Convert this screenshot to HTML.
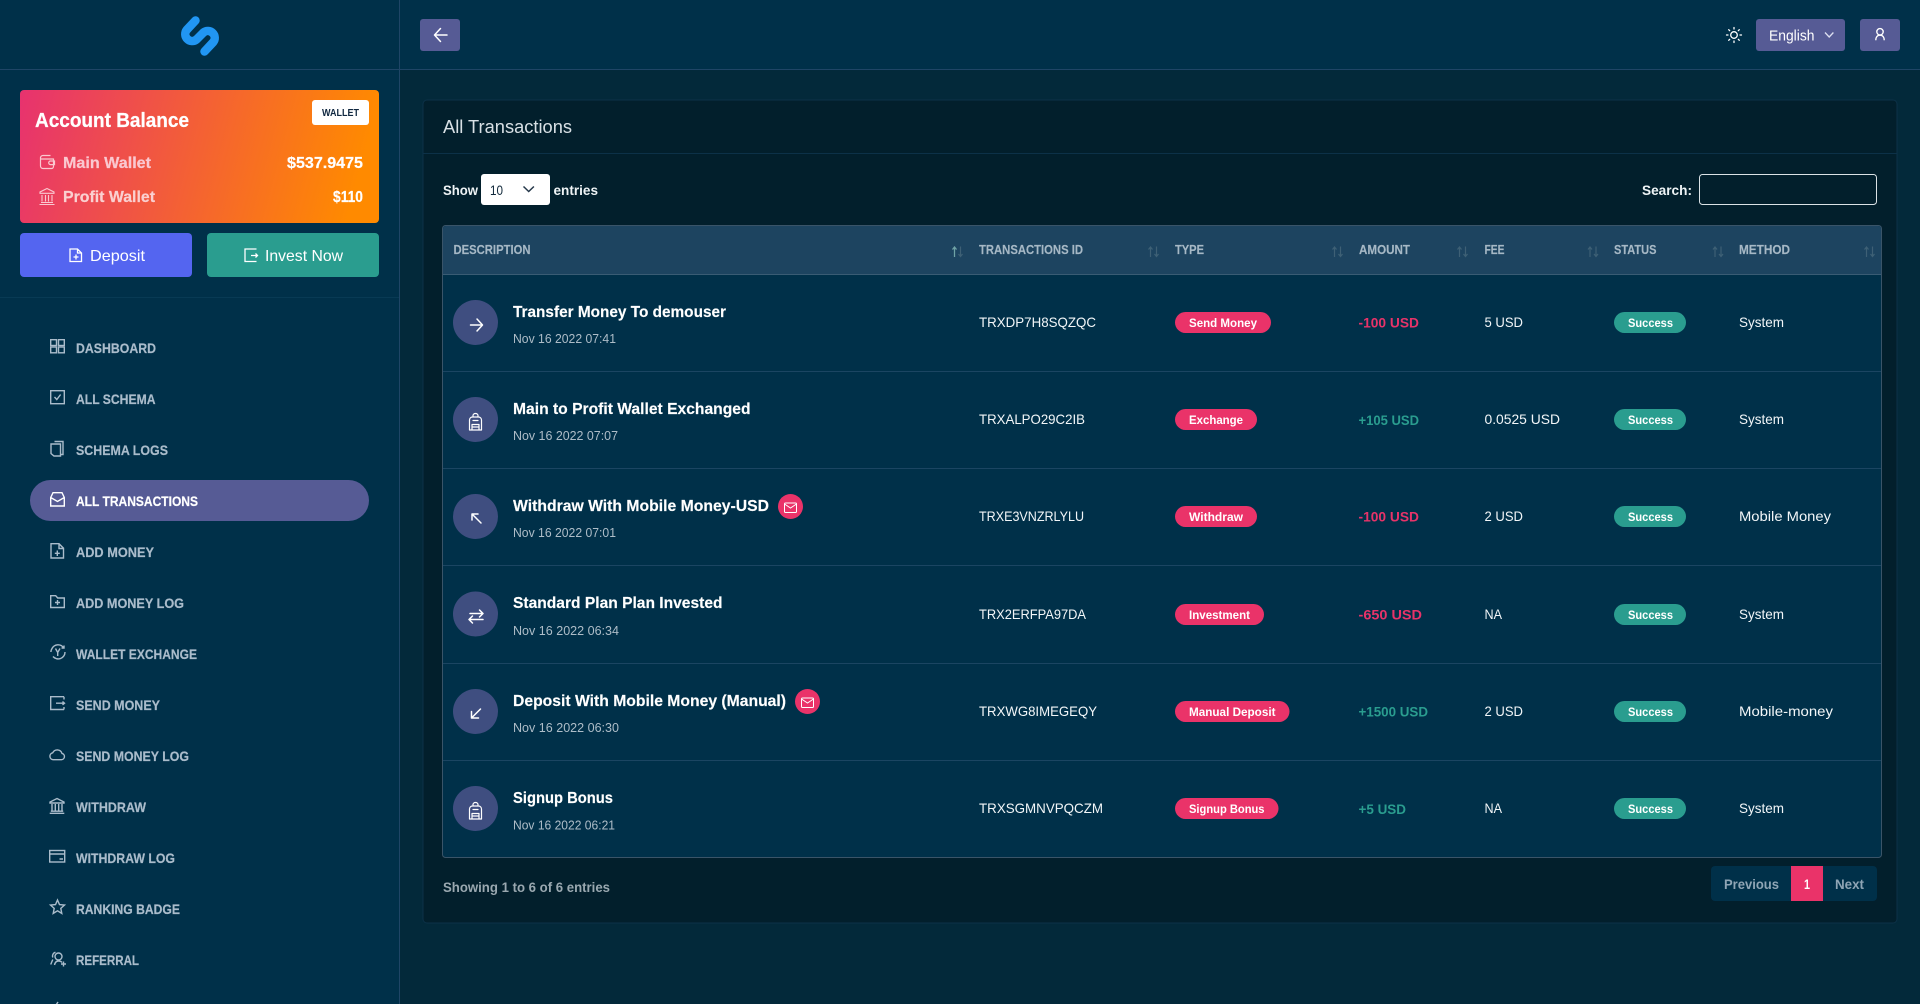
<!DOCTYPE html>
<html lang="en"><head><meta charset="utf-8"><title>All Transactions</title>
<style>
html,body{margin:0;padding:0;background:#03293a;width:1920px;height:1004px;overflow:hidden}
svg{display:block;font-family:"Liberation Sans",sans-serif}
.m{font-size:14px;font-weight:700;fill:#aabccb;stroke:#aabccb;stroke-width:.2px}
.th{font-size:12.5px;font-weight:700;fill:#a6b8c5;stroke:#a6b8c5;stroke-width:.15px}
.t{font-size:16px;font-weight:700;fill:#fff;stroke:#fff;stroke-width:.15px}
.d{font-size:13px;fill:#aebdc8}
.c{font-size:14px;fill:#f2f6f8}
.p{font-size:11.5px;font-weight:700;fill:#fff}
.r{font-size:14px;font-weight:700;fill:#e73369}
.g{font-size:14px;font-weight:700;fill:#2a9d8f}
.b{font-size:14px;font-weight:700;fill:#eef3f5}
.pg{font-size:14px;font-weight:700;fill:#8fa5b5}
.ic{fill:none;stroke:#aabccb;stroke-width:1.4}
.w{fill:none;stroke:#fff;stroke-width:1.5;stroke-linecap:round;stroke-linejoin:round}
</style></head><body>
<svg width="1920" height="1004" viewBox="0 0 1920 1004" xmlns="http://www.w3.org/2000/svg">
<defs>
<linearGradient id="bal" x1="0" x2="1" y1="0" y2="0.1"><stop offset="0" stop-color="#e7326f"/><stop offset="1" stop-color="#ff8a00"/></linearGradient>
<g id="sort"><path d="M3 11V1M1 3.5L3 1l2 2.5" fill="none" stroke="#3e6075" stroke-width="1.2"/><path d="M9 0.5v10M7 8l2 2.5L11 8" fill="none" stroke="#3e6075" stroke-width="1.2"/></g>
<g id="env"><circle cx="0" cy="0" r="12.5" fill="#ea3369"/><rect x="-6" y="-3.5" width="12" height="9.5" rx="1" fill="none" stroke="#fff" stroke-width="1"/><path d="M-6-2.5L0 1.5 6-2.5" fill="none" stroke="#fff" stroke-width="1"/></g>
<g id="bag"><path class="w" style="stroke-width:1.2" d="M-6 8V-2a3 3 0 0 1 3-3h6a3 3 0 0 1 3 3V8zM-2.500-5V-6.500a2.500 2 0 0 1 5 0V-5M-3.500 8V2.500h7V8M-3.500 5h7M-2.500-1.500h5"/></g>
</defs>

<rect x="0" y="0" width="400" height="1004" fill="#003049"/>
<rect x="400" y="0" width="1520" height="70" fill="#003049"/>
<rect x="0" y="69" width="1920" height="1" fill="#1f4566"/>
<rect x="399" y="0" width="1" height="1004" fill="#1f4566"/>
<rect x="0" y="297" width="399" height="1" fill="#083a54"/>

<path d="M195.500 20.500L186.800 29.800A6.900 6.900 0 0 0 196.500 39.500L203.500 32.500A6.900 6.900 0 0 1 213.200 42.200L204.500 51.500" fill="none" stroke="#2196f3" stroke-width="8.500" stroke-linecap="round" stroke-linejoin="round"/>

<rect x="20" y="90" width="359" height="133" rx="4" fill="url(#bal)"/>
<text x="35" y="127" font-size="20" font-weight="700" fill="#fff" stroke="#fff" stroke-width=".25" textLength="154" lengthAdjust="spacingAndGlyphs">Account Balance</text>
<rect x="312" y="100" width="57" height="25" rx="3" fill="#fff"/>
<text x="322" y="116" font-size="10.500" font-weight="700" fill="#0f2740" textLength="37" lengthAdjust="spacingAndGlyphs">WALLET</text>
<path d="M50.500 155.500H43a2.500 2.500 0 0 0-2.500 2.500v8a2.500 2.500 0 0 0 2.500 2.500h8.500a2 2 0 0 0 2-2V158.500M40.500 159h13M54.500 161h-4a1.800 1.800 0 0 0 0 3.600h4z" fill="none" stroke="#fac8d0" stroke-width="1.200"/>
<text x="63" y="168" font-size="16" font-weight="700" fill="#fac8d0" stroke="#fac8d0" stroke-width=".2" textLength="88" lengthAdjust="spacingAndGlyphs">Main Wallet</text>
<path d="M47 188.500l7 3.500v1.300H40V192zM42 195v6.500M45.500 195v6.500M48.500 195v6.500M52 195v6.500M41 202.500h12M39.500 204.500h15" fill="none" stroke="#fac8d0" stroke-width="1.100"/>
<text x="63" y="202" font-size="16" font-weight="700" fill="#fad0d0" stroke="#fad0d0" stroke-width=".2" textLength="92" lengthAdjust="spacingAndGlyphs">Profit Wallet</text>
<text x="287" y="168" font-size="16" font-weight="700" fill="#fff" stroke="#fff" stroke-width=".2" textLength="76" lengthAdjust="spacingAndGlyphs">$537.9475</text>
<text x="333" y="202" font-size="16" font-weight="700" fill="#fff" stroke="#fff" stroke-width=".2" textLength="30" lengthAdjust="spacingAndGlyphs">$110</text>

<rect x="20" y="233" width="172" height="44" rx="4" fill="#5465f0"/>
<path d="M70 249h7.500l4 4v8.500H70zM77.500 249v4h4M76 254.500v5M73.500 257h5" fill="none" stroke="#fff" stroke-width="1.300"/>
<text x="90" y="261" font-size="16" fill="#fff" textLength="55" lengthAdjust="spacingAndGlyphs">Deposit</text>
<rect x="207" y="233" width="172" height="44" rx="4" fill="#2a9d8f"/>
<path d="M256.500 249H245v12.500H256.500M251 255.500h6.500M255.500 253.500l2 2-2 2" fill="none" stroke="#fff" stroke-width="1.300"/>
<text x="265" y="261" font-size="16" fill="#fff" textLength="78" lengthAdjust="spacingAndGlyphs">Invest Now</text>

<rect x="30" y="480" width="339" height="41" rx="20.500" fill="#565b95"/>
<text class="m" x="76" y="353" textLength="80" lengthAdjust="spacingAndGlyphs">DASHBOARD</text>
<text class="m" x="76" y="404" textLength="79.500" lengthAdjust="spacingAndGlyphs">ALL SCHEMA</text>
<text class="m" x="76" y="455" textLength="92" lengthAdjust="spacingAndGlyphs">SCHEMA LOGS</text>
<text class="m" x="76" y="506" textLength="122" lengthAdjust="spacingAndGlyphs" style="fill:#fff;stroke:#fff">ALL TRANSACTIONS</text>
<text class="m" x="76" y="557" textLength="78" lengthAdjust="spacingAndGlyphs">ADD MONEY</text>
<text class="m" x="76" y="608" textLength="108" lengthAdjust="spacingAndGlyphs">ADD MONEY LOG</text>
<text class="m" x="76" y="659" textLength="121" lengthAdjust="spacingAndGlyphs">WALLET EXCHANGE</text>
<text class="m" x="76" y="710" textLength="84" lengthAdjust="spacingAndGlyphs">SEND MONEY</text>
<text class="m" x="76" y="761" textLength="113" lengthAdjust="spacingAndGlyphs">SEND MONEY LOG</text>
<text class="m" x="76" y="812" textLength="70" lengthAdjust="spacingAndGlyphs">WITHDRAW</text>
<text class="m" x="76" y="863" textLength="99" lengthAdjust="spacingAndGlyphs">WITHDRAW LOG</text>
<text class="m" x="76" y="914" textLength="104" lengthAdjust="spacingAndGlyphs">RANKING BADGE</text>
<text class="m" x="76" y="965" textLength="63" lengthAdjust="spacingAndGlyphs">REFERRAL</text>

<g class="ic">
<g transform="translate(50,339)"><rect x=".7" y=".7" width="5.800" height="5.800"/><rect x="8.500" y=".7" width="5.800" height="5.800"/><rect x=".7" y="8" width="5.800" height="5.800"/><rect x="8.500" y="8" width="5.800" height="5.800"/></g>
<g transform="translate(50,390)"><rect x=".7" y=".7" width="13.600" height="13"/><path d="M4.500 7l2.300 2.500 3.800-5"/></g>
<g transform="translate(50,440)"><path d="M4.500 1.500H13V14.500H10M1 4h9.500V16H4L1 13.500z"/></g>
<g transform="translate(50,492)" style="stroke:#fff"><path d="M.7 5.500L3 .7h9l2.300 4.800V14H.7zM.7 5.500L7.500 9.500 14.300 5.500"/></g>
<g transform="translate(50,543)"><path d="M1 .7h8l4.500 4.500V15H1zM9 .7V5.500h4.500M7.300 7.500v5.500M4.800 10.300h5"/></g>
<g transform="translate(50,595)"><path d="M.7 .7h5l2 2.300H14.300V12.500H.7zM7.500 5v5M5 7.500h5"/></g>
<g transform="translate(50,644)"><path d="M2 4.500A6.800 6.800 0 0 1 13.500 3.500M15 8A6.800 6.800 0 0 1 3 12.500M11.500 4h2.500V1.500M.9 8A6.800 6.800 0 0 1 2 4.500"/><path d="M5.500 4.500L7.700 8.500 10 4.500M7.700 8.500v3.500"/></g>
<g transform="translate(50,696)"><path d="M14 .7H.7V13.500H14M14 3.500V.7M14 13.500V11M6 7.200h8M12.500 5.500l2 1.700-2 1.700"/></g>
<g transform="translate(49,748)"><path d="M4 11.700H12.500a3.200 3.200 0 0 0 .5-6.300 5 5 0 0 0-9.300-.6A3.500 3.500 0 0 0 4 11.700z"/></g>
<g transform="translate(49,798)"><path d="M8 .5L15 4v1H1V4zM3 6v7M6.300 6v7M9.700 6v7M13 6v7M1.800 13.200h12.400M.7 15.300h14.600"/></g>
<g transform="translate(49,849)"><rect x=".7" y="1.500" width="15" height="11.500"/><path d="M.7 5h15M10.500 10h3.500"/></g>
<g transform="translate(50,899)"><path d="M7.500 1l2 4.600 5 .5-3.700 3.300 1 5-4.300-2.600-4.300 2.600 1-5L.5 6.100l5-.5z"/></g>
<g transform="translate(50,951)"><path d="M5.500 1.300A3.800 3.800 0 0 0 2.800 6.500M2.800 8.500L.7 13.500"/><circle cx="8.500" cy="5.500" r="3.500"/><path d="M4.500 14c.5-2.500 2-4 4-4s3 .8 3.500 1.500M13.500 10.500v5M11 13h5"/></g>
<g transform="translate(50,1001)"><path d="M8 1l-2 3H2"/></g>
</g>

<!-- top bar -->
<rect x="420" y="19" width="40" height="32" rx="3" fill="#565b95"/>
<path class="w" d="M434.500 35H447M440.500 28.500L434.500 35l6 6.500"/>
<g transform="translate(1734,35)" fill="none" stroke="#fff" stroke-width="1.300" stroke-linecap="round"><circle r="3.300"/><path d="M0-7.500v1.500M0 6v1.500M-7.500 0H-6M6 0h1.500M-5.300-5.300l1 1M4.300 4.300l1 1M-5.300 5.300l1-1M4.300-4.300l1-1"/></g>
<rect x="1756" y="19" width="89" height="32" rx="3" fill="#565b95"/>
<text x="1769" y="40.500" font-size="15" fill="#fff" textLength="45.500" lengthAdjust="spacingAndGlyphs">English</text>
<path d="M1825 32.500l4.200 4.500 4.200-4.500" fill="none" stroke="#dcdff0" stroke-width="1.300"/>
<rect x="1860" y="19" width="40" height="32" rx="3" fill="#565b95"/>
<circle cx="1880" cy="31.800" r="3.200" fill="none" stroke="#fff" stroke-width="1.400"/>
<path d="M1875.800 40.200c0-3 1.500-5 4.200-5s4.200 2 4.200 5" fill="none" stroke="#fff" stroke-width="1.400"/>

<!-- card -->
<rect x="423" y="100" width="1474" height="823" rx="4" fill="#021f2c" stroke="#0c3148"/>
<rect x="423" y="153" width="1474" height="1" fill="#0c3148"/>
<text x="443" y="133" font-size="18" fill="#d8e0e5" textLength="129" lengthAdjust="spacingAndGlyphs">All Transactions</text>

<text class="b" x="443" y="195" textLength="35" lengthAdjust="spacingAndGlyphs">Show</text>
<rect x="481" y="174" width="69" height="31" rx="3" fill="#fff"/>
<text x="490" y="195" font-size="14" fill="#10283a" textLength="13" lengthAdjust="spacingAndGlyphs">10</text>
<path d="M523.500 186.500l5.200 5 5.200-5" fill="none" stroke="#25384a" stroke-width="1.500"/>
<text class="b" x="553.500" y="195" textLength="44.500" lengthAdjust="spacingAndGlyphs">entries</text>
<text class="b" x="1642" y="195" textLength="50" lengthAdjust="spacingAndGlyphs">Search:</text>
<rect x="1699.500" y="174.500" width="177" height="30" rx="3" fill="none" stroke="#dbe2e6"/>

<!-- table -->
<rect x="442.500" y="225.500" width="1439" height="632" rx="3" fill="#003049" stroke="#3a5468"/>
<path d="M443 274V229q0-3 3-3H1878q3 0 3 3V274z" fill="#1d4460"/>
<rect x="443" y="274" width="1438" height="1" fill="#3a5c74"/>
<rect x="443" y="371" width="1438" height="1" fill="#1b4562"/>
<rect x="443" y="468" width="1438" height="1" fill="#1b4562"/>
<rect x="443" y="565" width="1438" height="1" fill="#1b4562"/>
<rect x="443" y="663" width="1438" height="1" fill="#1b4562"/>
<rect x="443" y="760" width="1438" height="1" fill="#1b4562"/>

<text class="th" x="453.500" y="254" textLength="77" lengthAdjust="spacingAndGlyphs">DESCRIPTION</text>
<text class="th" x="979" y="254" textLength="104" lengthAdjust="spacingAndGlyphs">TRANSACTIONS ID</text>
<text class="th" x="1175" y="254" textLength="29" lengthAdjust="spacingAndGlyphs">TYPE</text>
<text class="th" x="1359" y="254" textLength="51" lengthAdjust="spacingAndGlyphs">AMOUNT</text>
<text class="th" x="1484.500" y="254" textLength="20" lengthAdjust="spacingAndGlyphs">FEE</text>
<text class="th" x="1614" y="254" textLength="42.500" lengthAdjust="spacingAndGlyphs">STATUS</text>
<text class="th" x="1739" y="254" textLength="51" lengthAdjust="spacingAndGlyphs">METHOD</text>
<use href="#sort" x="951.500" y="246"/>
<path d="M954.500 257V247M952.500 249.500l2-2.500 2 2.500" fill="none" stroke="#6fa3a6" stroke-width="1.200"/>
<use href="#sort" x="1147.500" y="246"/>
<use href="#sort" x="1331.500" y="246"/>
<use href="#sort" x="1456.500" y="246"/>
<use href="#sort" x="1587" y="246"/>
<use href="#sort" x="1712" y="246"/>
<use href="#sort" x="1863.500" y="246"/>

<!-- avatars -->
<g fill="#3f4e80">
<circle cx="475.500" cy="322.500" r="22.500"/><circle cx="475.500" cy="419.500" r="22.500"/><circle cx="475.500" cy="516.500" r="22.500"/><circle cx="475.500" cy="614" r="22.500"/><circle cx="475.500" cy="711.500" r="22.500"/><circle cx="475.500" cy="808.500" r="22.500"/>
</g>
<path class="w" d="M470.500 325H482M477 319l5.500 6-5.500 6"/>
<use href="#bag" x="475.500" y="422"/>
<path class="w" d="M481 523L472 514M472 520v-6h6"/>
<path class="w" d="M470 613.500H483M479.500 610L483 613.500 479.500 617M483 619.500H469M472.500 616L469 619.500 472.500 623"/>
<path class="w" d="M480.500 709L471.500 718M471.500 711.500v6.500h7"/>
<use href="#bag" x="475.500" y="811"/>

<!-- descriptions -->
<text class="t" x="513" y="317" textLength="213" lengthAdjust="spacingAndGlyphs">Transfer Money To demouser</text>
<text class="d" x="513" y="343" textLength="103" lengthAdjust="spacingAndGlyphs">Nov 16 2022 07:41</text>
<text class="t" x="513" y="414" textLength="237.500" lengthAdjust="spacingAndGlyphs">Main to Profit Wallet Exchanged</text>
<text class="d" x="513" y="440" textLength="105" lengthAdjust="spacingAndGlyphs">Nov 16 2022 07:07</text>
<text class="t" x="513" y="511" textLength="256" lengthAdjust="spacingAndGlyphs">Withdraw With Mobile Money-USD</text>
<text class="d" x="513" y="537" textLength="103" lengthAdjust="spacingAndGlyphs">Nov 16 2022 07:01</text>
<use href="#env" x="790.500" y="506.500"/>
<text class="t" x="513" y="608" textLength="209.500" lengthAdjust="spacingAndGlyphs">Standard Plan Plan Invested</text>
<text class="d" x="513" y="635" textLength="106" lengthAdjust="spacingAndGlyphs">Nov 16 2022 06:34</text>
<text class="t" x="513" y="706" textLength="273" lengthAdjust="spacingAndGlyphs">Deposit With Mobile Money (Manual)</text>
<text class="d" x="513" y="732" textLength="106" lengthAdjust="spacingAndGlyphs">Nov 16 2022 06:30</text>
<use href="#env" x="807.500" y="701.500"/>
<text class="t" x="513" y="803" textLength="100" lengthAdjust="spacingAndGlyphs">Signup Bonus</text>
<text class="d" x="513" y="829.500" textLength="102" lengthAdjust="spacingAndGlyphs">Nov 16 2022 06:21</text>

<!-- ids -->
<text class="c" x="979" y="327" textLength="117" lengthAdjust="spacingAndGlyphs">TRXDP7H8SQZQC</text>
<text class="c" x="979" y="424" textLength="106" lengthAdjust="spacingAndGlyphs">TRXALPO29C2IB</text>
<text class="c" x="979" y="521" textLength="105" lengthAdjust="spacingAndGlyphs">TRXE3VNZRLYLU</text>
<text class="c" x="979" y="619" textLength="107" lengthAdjust="spacingAndGlyphs">TRX2ERFPA97DA</text>
<text class="c" x="979" y="716" textLength="118" lengthAdjust="spacingAndGlyphs">TRXWG8IMEGEQY</text>
<text class="c" x="979" y="813" textLength="124" lengthAdjust="spacingAndGlyphs">TRXSGMNVPQCZM</text>

<!-- type pills -->
<g fill="#ea3369">
<rect x="1175" y="312" width="96" height="21" rx="10.500"/><rect x="1175" y="409" width="82" height="21" rx="10.500"/><rect x="1175" y="506" width="82" height="21" rx="10.500"/><rect x="1175" y="604" width="89" height="21" rx="10.500"/><rect x="1175" y="701" width="114.500" height="21" rx="10.500"/><rect x="1175" y="798" width="103.500" height="21" rx="10.500"/>
</g>
<text class="p" x="1189" y="327" textLength="68" lengthAdjust="spacingAndGlyphs">Send Money</text>
<text class="p" x="1189" y="424" textLength="54" lengthAdjust="spacingAndGlyphs">Exchange</text>
<text class="p" x="1189" y="521" textLength="54" lengthAdjust="spacingAndGlyphs">Withdraw</text>
<text class="p" x="1189" y="619" textLength="61" lengthAdjust="spacingAndGlyphs">Investment</text>
<text class="p" x="1189" y="716" textLength="86.500" lengthAdjust="spacingAndGlyphs">Manual Deposit</text>
<text class="p" x="1189" y="813" textLength="75.500" lengthAdjust="spacingAndGlyphs">Signup Bonus</text>

<!-- amounts -->
<text class="r" x="1358.500" y="327.500" textLength="60.500" lengthAdjust="spacingAndGlyphs">-100 USD</text>
<text class="g" x="1358.500" y="425" textLength="60.500" lengthAdjust="spacingAndGlyphs">+105 USD</text>
<text class="r" x="1358.500" y="521.500" textLength="60.500" lengthAdjust="spacingAndGlyphs">-100 USD</text>
<text class="r" x="1358.500" y="619.500" textLength="63.500" lengthAdjust="spacingAndGlyphs">-650 USD</text>
<text class="g" x="1358.500" y="716.500" textLength="69.500" lengthAdjust="spacingAndGlyphs">+1500 USD</text>
<text class="g" x="1358.500" y="814" textLength="47.500" lengthAdjust="spacingAndGlyphs">+5 USD</text>

<!-- fees -->
<text class="c" x="1484.500" y="327" textLength="38.500" lengthAdjust="spacingAndGlyphs">5 USD</text>
<text class="c" x="1484.500" y="424" textLength="75.500" lengthAdjust="spacingAndGlyphs">0.0525 USD</text>
<text class="c" x="1484.500" y="521" textLength="38.500" lengthAdjust="spacingAndGlyphs">2 USD</text>
<text class="c" x="1484.500" y="619" textLength="17.500" lengthAdjust="spacingAndGlyphs">NA</text>
<text class="c" x="1484.500" y="716" textLength="38.500" lengthAdjust="spacingAndGlyphs">2 USD</text>
<text class="c" x="1484.500" y="813" textLength="17.500" lengthAdjust="spacingAndGlyphs">NA</text>

<!-- status -->
<g fill="#2a9d8f">
<rect x="1614" y="312" width="72" height="21" rx="10.500"/><rect x="1614" y="409" width="72" height="21" rx="10.500"/><rect x="1614" y="506" width="72" height="21" rx="10.500"/><rect x="1614" y="604" width="72" height="21" rx="10.500"/><rect x="1614" y="701" width="72" height="21" rx="10.500"/><rect x="1614" y="798" width="72" height="21" rx="10.500"/>
</g>
<text class="p" x="1628" y="327" textLength="45" lengthAdjust="spacingAndGlyphs">Success</text>
<text class="p" x="1628" y="424" textLength="45" lengthAdjust="spacingAndGlyphs">Success</text>
<text class="p" x="1628" y="521" textLength="45" lengthAdjust="spacingAndGlyphs">Success</text>
<text class="p" x="1628" y="619" textLength="45" lengthAdjust="spacingAndGlyphs">Success</text>
<text class="p" x="1628" y="716" textLength="45" lengthAdjust="spacingAndGlyphs">Success</text>
<text class="p" x="1628" y="813" textLength="45" lengthAdjust="spacingAndGlyphs">Success</text>

<!-- method -->
<text class="c" x="1739" y="327" textLength="45" lengthAdjust="spacingAndGlyphs">System</text>
<text class="c" x="1739" y="424" textLength="45" lengthAdjust="spacingAndGlyphs">System</text>
<text class="c" x="1739" y="521" textLength="92" lengthAdjust="spacingAndGlyphs">Mobile Money</text>
<text class="c" x="1739" y="619" textLength="45" lengthAdjust="spacingAndGlyphs">System</text>
<text class="c" x="1739" y="716" textLength="94" lengthAdjust="spacingAndGlyphs">Mobile-money</text>
<text class="c" x="1739" y="813" textLength="45" lengthAdjust="spacingAndGlyphs">System</text>

<!-- footer -->
<text x="443" y="892" font-size="13.500" font-weight="700" fill="#9aa8b0" textLength="167" lengthAdjust="spacingAndGlyphs">Showing 1 to 6 of 6 entries</text>
<rect x="1711" y="866" width="166" height="35" rx="4" fill="#003049"/>
<rect x="1791" y="866" width="32" height="35" fill="#ea3369"/>
<text class="pg" x="1724" y="889" textLength="55" lengthAdjust="spacingAndGlyphs">Previous</text>
<text x="1804" y="889" font-size="14" font-weight="700" fill="#fff" textLength="6" lengthAdjust="spacingAndGlyphs">1</text>
<text class="pg" x="1835" y="889" textLength="29" lengthAdjust="spacingAndGlyphs">Next</text>
</svg>
</body></html>
